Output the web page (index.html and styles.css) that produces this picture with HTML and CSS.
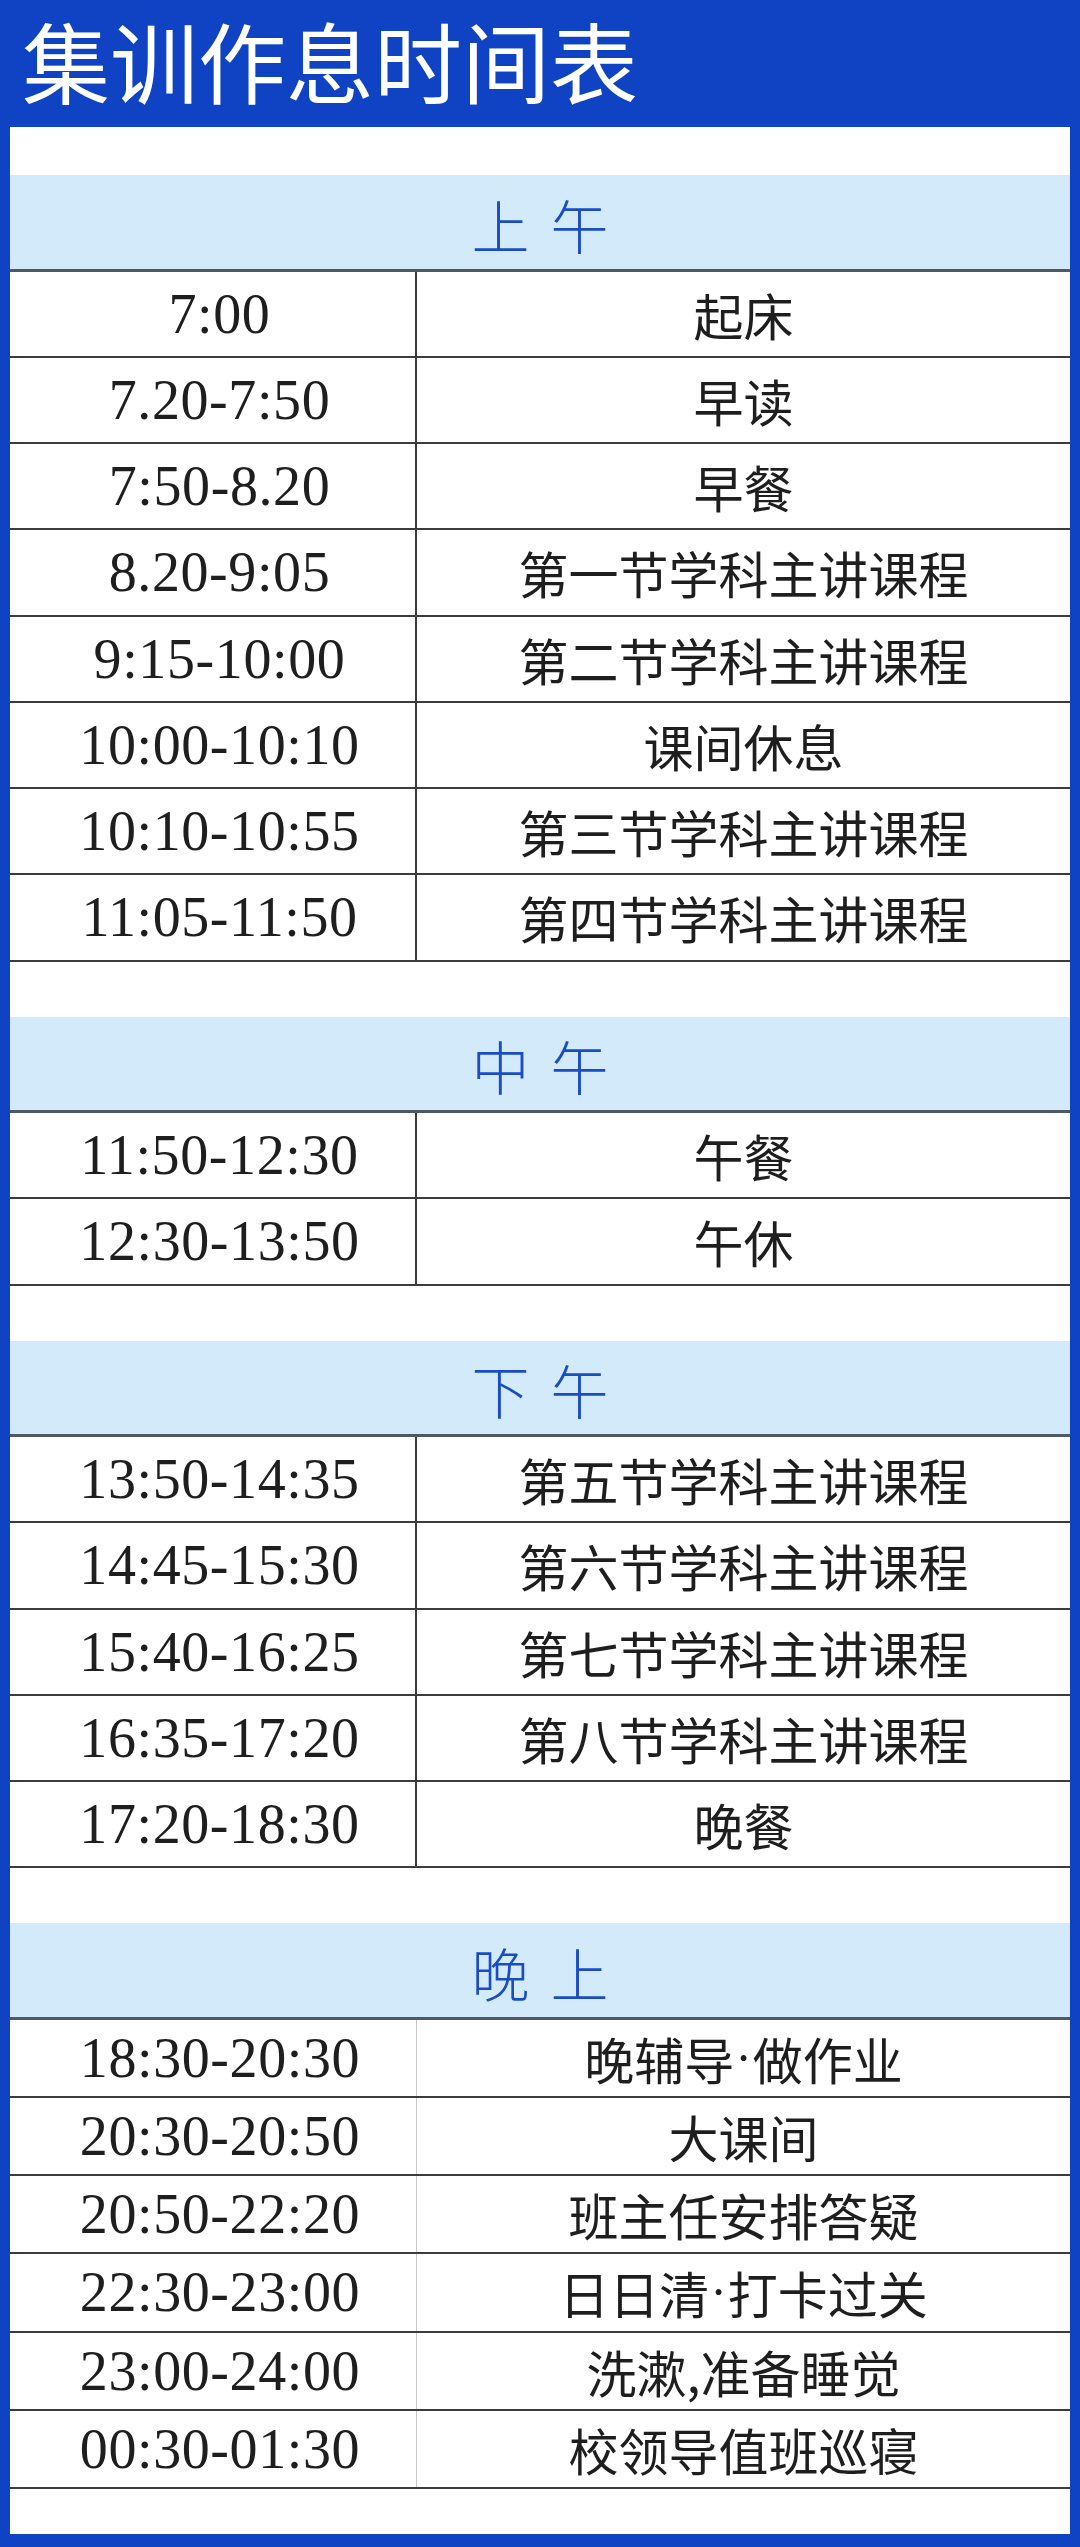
FILE: index.html
```html
<!DOCTYPE html>
<html lang="zh-CN">
<head>
<meta charset="utf-8">
<title>集训作息时间表</title>
<link rel="stylesheet" href="styles.css">
</head>
<body>
<div class="page">
  <h1 class="title">集训作息时间表</h1>
  <div class="panel">
    <section class="sec">
      <div class="sec-head">上 午</div>
      <div class="row"><div class="t">7:00</div><div class="d">起床</div></div>
      <div class="row"><div class="t">7.20-7:50</div><div class="d">早读</div></div>
      <div class="row"><div class="t">7:50-8.20</div><div class="d">早餐</div></div>
      <div class="row"><div class="t">8.20-9:05</div><div class="d">第一节学科主讲课程</div></div>
      <div class="row"><div class="t">9:15-10:00</div><div class="d">第二节学科主讲课程</div></div>
      <div class="row"><div class="t">10:00-10:10</div><div class="d">课间休息</div></div>
      <div class="row"><div class="t">10:10-10:55</div><div class="d">第三节学科主讲课程</div></div>
      <div class="row"><div class="t">11:05-11:50</div><div class="d">第四节学科主讲课程</div></div>
    </section>
    <section class="sec">
      <div class="sec-head">中 午</div>
      <div class="row"><div class="t">11:50-12:30</div><div class="d">午餐</div></div>
      <div class="row"><div class="t">12:30-13:50</div><div class="d">午休</div></div>
    </section>
    <section class="sec">
      <div class="sec-head">下 午</div>
      <div class="row"><div class="t">13:50-14:35</div><div class="d">第五节学科主讲课程</div></div>
      <div class="row"><div class="t">14:45-15:30</div><div class="d">第六节学科主讲课程</div></div>
      <div class="row"><div class="t">15:40-16:25</div><div class="d">第七节学科主讲课程</div></div>
      <div class="row"><div class="t">16:35-17:20</div><div class="d">第八节学科主讲课程</div></div>
      <div class="row"><div class="t">17:20-18:30</div><div class="d">晚餐</div></div>
    </section>
    <section class="sec sec-night">
      <div class="sec-head">晚 上</div>
      <div class="row"><div class="t">18:30-20:30</div><div class="d">晚辅导<span class="dot">·</span>做作业</div></div>
      <div class="row"><div class="t">20:30-20:50</div><div class="d">大课间</div></div>
      <div class="row"><div class="t">20:50-22:20</div><div class="d">班主任安排答疑</div></div>
      <div class="row"><div class="t">22:30-23:00</div><div class="d">日日清<span class="dot">·</span>打卡过关</div></div>
      <div class="row"><div class="t">23:00-24:00</div><div class="d">洗漱,准备睡觉</div></div>
      <div class="row"><div class="t">00:30-01:30</div><div class="d">校领导值班巡寝</div></div>
    </section>
  </div>
</div>
</body>
</html>
```
FILE: styles.css
```css
* { box-sizing: border-box; }
html, body { margin: 0; padding: 0; }
body {
  width: 1080px;
  height: 2547px;
  background: #1043c4;
  overflow: hidden;
}
.page {
  width: 1080px;
  height: 2547px;
  display: flex;
  flex-direction: column;
}
.title {
  margin: 0;
  height: 127px;
  padding-left: 22px;
  font-family: "Noto Sans CJK SC", sans-serif;
  font-weight: 400;
  font-size: 88px;
  line-height: 118px;
  color: #ffffff;
  letter-spacing: 0;
}
.panel {
  margin: 0 10px;
  height: 2407px;
  background: #ffffff;
  padding: 48px 0 0;
  display: flex;
  flex-direction: column;
  gap: 55px;
}
.sec { display: flex; flex-direction: column; }
.sec-head {
  height: 96.5px;
  background: #d3eafa;
  border-bottom: 3px solid #4d5a66;
  display: flex;
  align-items: center;
  justify-content: center;
  font-family: "Noto Sans CJK SC", sans-serif;
  font-weight: 300;
  font-size: 58px;
  color: #1a4cc4;
  word-spacing: 8px;
  padding-top: 4px;
}
.row {
  height: 86.25px;
  display: grid;
  grid-template-columns: 407px 1fr;
  border-bottom: 2px solid #3c3c3c;
}
.sec-night .row { height: 78.2px; }
.t {
  display: flex;
  align-items: center;
  justify-content: center;
  padding-left: 14px;
  border-right: 2px solid #3c3c3c;
  font-family: "Liberation Serif", serif;
  font-size: 56px;
  letter-spacing: 0.6px;
  color: #1e1e1e;
}
.sec-night .t { border-right: 1px solid #c8c8c8; }
.d {
  display: flex;
  align-items: center;
  justify-content: center;
  font-family: "Noto Sans CJK SC", sans-serif;
  font-weight: 400;
  font-size: 50px;
  color: #1e1e1e;
}
.dot {
  font-family: "Liberation Serif", serif;
  font-size: 50px;
  padding: 0 1px;
}
```
